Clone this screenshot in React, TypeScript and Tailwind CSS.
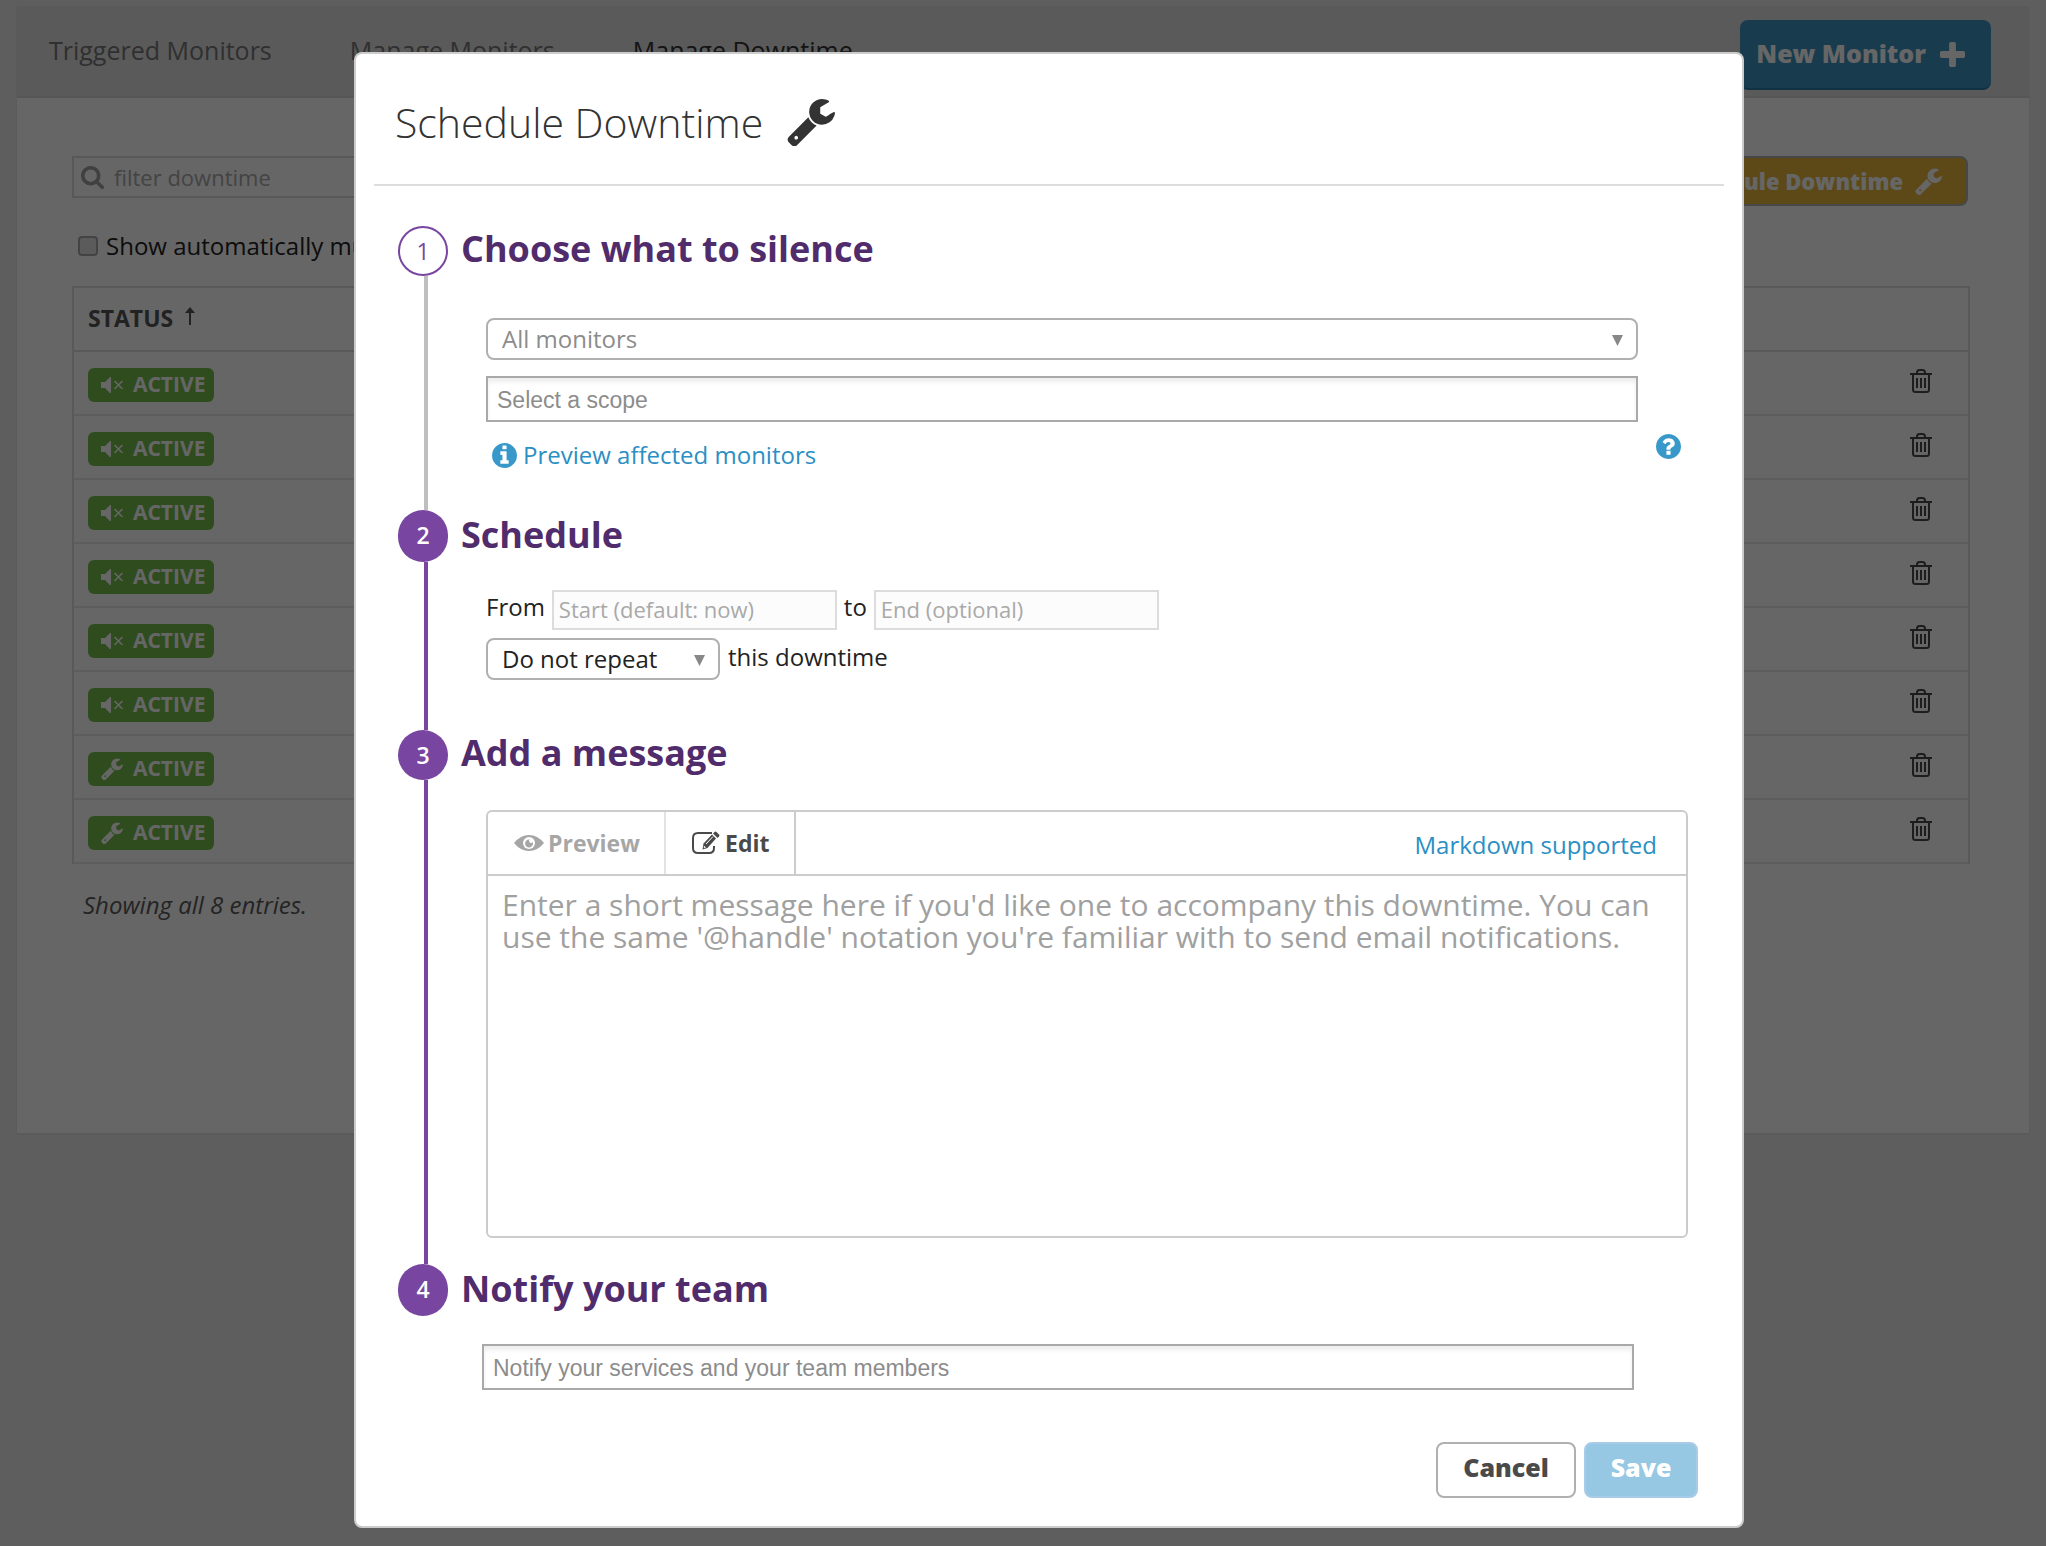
import type { ReactNode } from "react";

type IconProps = { className?: string };

function WrenchIcon({ className }: IconProps) {
  return (
    <svg viewBox="64 128 1664 1600" className={className} fill="currentColor" aria-hidden="true">
      <path d="M448 1472q0-26-19-45t-45-19-45 19-19 45 19 45 45 19 45-19 19-45zm644-420l-682 682q-37 37-90 37-52 0-91-37l-106-108q-38-36-38-90 0-53 38-91l681-681q39 98 114.500 173.500t173.500 114.500zm634-435q0 39-23 106-47 134-164.500 217.500t-258.500 83.500q-185 0-316.500-131.500t-131.500-316.500 131.500-316.500 316.500-131.500q58 0 121.500 16.500t107.500 46.500q16 11 16 28t-16 28l-293 169v224l193 107q5-3 79-48.500t135.500-81 70.500-35.500q15 0 23.500 10t8.500 25z" />
    </svg>
  );
}

function PlusIcon({ className }: IconProps) {
  return (
    <svg viewBox="192 128 1408 1408" className={className} fill="currentColor" aria-hidden="true">
      <path d="M1600 736v192q0 40-28 68t-68 28h-416v416q0 40-28 68t-68 28h-192q-40 0-68-28t-28-68v-416h-416q-40 0-68-28t-28-68v-192q0-40 28-68t68-28h416v-416q0-40 28-68t68-28h192q40 0 68 28t28 68v416h416q40 0 68 28t28 68z" />
    </svg>
  );
}

function SearchIcon({ className }: IconProps) {
  return (
    <svg viewBox="64 128 1664 1664" className={className} fill="currentColor" aria-hidden="true">
      <path d="M1216 832q0-185-131.500-316.500t-316.500-131.500-316.500 131.500-131.500 316.500 131.500 316.500 316.500 131.500 316.500-131.500 131.500-316.500zm512 832q0 52-38 90t-90 38q-54 0-90-38l-343-342q-179 124-399 124-143 0-273.500-55.500t-225-150-150-225-55.500-273.500 55.500-273.500 150-225 225-150 273.500-55.500 273.500 55.500 225 150 150 225 55.500 273.500q0 220-124 399l343 343q37 37 37 90z" />
    </svg>
  );
}

function InfoIcon({ className }: IconProps) {
  return (
    <svg viewBox="128 128 1536 1536" className={className} fill="currentColor" aria-hidden="true">
      <path d="M1152 1376v-160q0-14-9-23t-23-9h-96v-512q0-14-9-23t-23-9h-320q-14 0-23 9t-9 23v160q0 14 9 23t23 9h96v320h-96q-14 0-23 9t-9 23v160q0 14 9 23t23 9h448q14 0 23-9t9-23zm-128-896v-160q0-14-9-23t-23-9h-192q-14 0-23 9t-9 23v160q0 14 9 23t23 9h192q14 0 23-9t9-23zm640 416q0 209-103 385.500t-279.500 279.500-385.500 103-385.500-103-279.500-279.500-103-385.500 103-385.500 279.500-279.500 385.500-103 385.500 103 279.500 279.500 103 385.500z" />
    </svg>
  );
}

function QuestionIcon({ className }: IconProps) {
  return (
    <svg viewBox="128 128 1536 1536" className={className} fill="currentColor" aria-hidden="true">
      <path d="M1024 1376v-192q0-14-9-23t-23-9h-192q-14 0-23 9t-9 23v192q0 14 9 23t23 9h192q14 0 23-9t9-23zm256-672q0-88-55.500-163t-138.500-116-170-41q-243 0-371 213-15 24 8 42l132 100q7 6 19 6 16 0 25-12 53-68 86-92 34-24 86-24 48 0 85.500 26t37.500 59q0 38-20 61t-68 45q-63 28-115.500 86.500t-52.500 125.500v36q0 14 9 23t23 9h192q14 0 23-9t9-23q0-19 21.500-49.500t54.500-49.500q32-18 49-28.500t46-35 44.500-48 28-60.500 12.500-81zm384 192q0 209-103 385.500t-279.500 279.500-385.500 103-385.500-103-279.500-279.500-103-385.500 103-385.500 279.500-279.500 385.500-103 385.500 103 279.500 279.500 103 385.500z" />
    </svg>
  );
}

function MuteIcon({ className }: IconProps) {
  return (
    <svg viewBox="0 0 22 16" className={className} aria-hidden="true">
      <path d="M0 5h4l5-5h1v16H9l-5-5H0z" fill="currentColor" />
      <path d="M13.500 4l8 8M21.500 4l-8 8" fill="none" stroke="currentColor" strokeWidth="1.500" />
    </svg>
  );
}

function TrashIcon({ className }: IconProps) {
  return (
    <svg viewBox="0 0 22 24" className={className} fill="none" stroke="currentColor" strokeWidth="2" aria-hidden="true">
      <path d="M0 5h22" />
      <path d="M7 4.500V3.500Q7 1 9.500 1h3Q15 1 15 3.500v1" />
      <path d="M3 5v15.500Q3 23 5.500 23h11q2.500 0 2.500-2.500V5" />
      <path d="M7 9v10M11 9v10M15 9v10" />
    </svg>
  );
}

function EyeIcon({ className }: IconProps) {
  return (
    <svg viewBox="0 0 30 16" className={className} aria-hidden="true">
      <path d="M0 8Q6.500 0 15 0t15 8q-6.500 8-15 8T0 8z" fill="currentColor" />
      <circle cx="15" cy="8" r="6" fill="#fff" />
      <path d="M15.500 4.500a1.800 1.800 0 1 0 3.300 2.500A4 4 0 1 1 15.500 4.500z" fill="currentColor" />
    </svg>
  );
}

function EditIcon({ className }: IconProps) {
  return (
    <svg viewBox="0 0 28 24" className={className} aria-hidden="true">
      <path d="M20 2H6Q1 2 1 7v10q0 5 5 5h11q5 0 5-5v-2" fill="none" stroke="currentColor" strokeWidth="2" />
      <path d="M11.500 12.500L20 3.500l4 4-8.500 9.500-5 1.500z" fill="currentColor" />
      <path d="M21 2.500l1.500-1.500q1-1 2 0l2.500 2.500q1 1 0 2L25.500 7z" fill="currentColor" />
      <path d="M14 13l7-7.500" stroke="#fff" strokeWidth="1" />
      <path d="M12 15.500l1.300 1.300" stroke="#fff" strokeWidth="1.500" />
    </svg>
  );
}

function SortArrow({ className }: IconProps) {
  return (
    <svg viewBox="0 0 10 18" className={className} aria-hidden="true">
      <path d="M5 0l5 6H0z" fill="currentColor" />
      <path d="M5 5v13" stroke="currentColor" strokeWidth="2" />
    </svg>
  );
}

function Caret() {
  return (
    <svg viewBox="0 0 11 11" className="pointer-events-none absolute top-[17px] right-[15px] size-[11px] text-[#888]" aria-hidden="true">
      <path d="M0 0h11L5.500 11z" fill="currentColor" />
    </svg>
  );
}

const downtimes = ["mute", "mute", "mute", "mute", "mute", "mute", "wrench", "wrench"];

function MonitorsPage() {
  return (
    <main className="mx-4 mt-1.5 border border-t-0 border-b-2 border-[#e4e4e4] bg-white pb-[212px]">
      <header className="flex items-start justify-between border-b-2 border-[#d8d8d8] bg-[#e0e0e0] pr-[38px] pb-0.5 pl-8">
        <nav className="flex gap-[78px] text-[25px] leading-[88px] whitespace-nowrap text-[#787878]">
          <a href="#triggered">Triggered Monitors</a>
          <a href="#manage">Manage Monitors</a>
          <a href="#downtime" className="text-[#333]">Manage Downtime</a>
        </nav>
        <button className="mt-3.5 flex h-[70px] items-center gap-3.5 rounded-lg border-b-2 border-[#2a7ba5] bg-[#3c96c3] pr-[26px] pl-4 text-[25px] font-extrabold whitespace-nowrap text-white">
          New Monitor
          <PlusIcon className="size-[25px]" />
        </button>
      </header>

      <div className="pt-[58px] pr-[59px] pl-[55px]">
        <div className="flex items-start justify-between">
          <label className="flex h-[42px] w-[420px] items-center gap-2.5 border-2 border-[#dcdcdc] px-[7px] text-[#a0a0a0]">
            <SearchIcon className="size-[23px]" />
            <input
              type="text"
              aria-label="Filter downtime"
              placeholder="filter downtime"
              className="min-w-0 flex-1 text-[22px] outline-none placeholder:text-[#aaa]"
            />
          </label>
          <button className="mr-0.5 flex h-[50px] items-center gap-3 rounded-lg border-2 border-[#b2b2b2] bg-[#e6b63a] px-6 text-[22px] font-extrabold text-white">
            Schedule Downtime
            <WrenchIcon className="size-[27px]" />
          </button>
        </div>

        <label className="mt-5 flex items-center gap-2 pl-1.5 text-[24px] leading-10 text-[#222]">
          <input type="checkbox" className="size-5 appearance-none rounded border-2 border-[#a8a8a8] bg-[#e4e4e4]" />
          Show automatically muted
        </label>

        <table className="mt-5 w-full border-separate border-spacing-0 border-x-2 border-t-2 border-[#dedede]">
          <thead>
            <tr className="h-16">
              <th scope="col" className="border-b-2 border-[#dedede] pb-0.5 pl-3.5 text-left text-[23px] font-bold text-[#555]">
                <span className="flex items-center gap-3">
                  STATUS
                  <SortArrow className="mb-1 h-[18px] w-2.5" />
                </span>
              </th>
              <th scope="col" aria-label="Actions" className="border-b-2 border-[#dedede]" />
            </tr>
          </thead>
          <tbody>
            {downtimes.map((kind, i) => (
              <tr key={i} className="h-16">
                <td className="border-b-2 border-[#e8e8e8] pt-1 pl-3.5">
                  <span className="flex h-[34px] w-[126px] items-center gap-2.5 rounded-md bg-[#75be4e] pl-[13px] text-[21px] font-bold text-white">
                    {kind === "mute" ? <MuteIcon className="h-4 w-[22px]" /> : <WrenchIcon className="size-[22px]" />}
                    ACTIVE
                  </span>
                </td>
                <td className="border-b-2 border-[#e8e8e8] pt-0.5 pr-9 text-right">
                  <button aria-label="Delete downtime" className="text-[#4a4a4a]">
                    <TrashIcon className="h-6 w-[22px]" />
                  </button>
                </td>
              </tr>
            ))}
          </tbody>
        </table>

        <p className="mt-6 pt-px pl-[11px] text-[24px] leading-8 text-[#5a5a5a] italic">Showing all 8 entries.</p>
      </div>
    </main>
  );
}

type StepProps = {
  number: number;
  title: string;
  outlined?: boolean;
  tall?: boolean;
  last?: boolean;
  children: ReactNode;
};

function Step({ number, title, outlined, tall, last, children }: StepProps) {
  return (
    <section className="flex gap-[13px]">
      <div className="flex w-[50px] flex-col items-center">
        <span
          className={
            outlined
              ? "flex h-[50px] w-[50px] shrink-0 items-center justify-center rounded-full border-2 border-[#7846a0] text-[23px] text-[#7846a0]"
              : tall
                ? "flex h-[52px] w-[50px] shrink-0 items-center justify-center rounded-full bg-[#7846a0] pb-0.5 text-[23px] font-semibold text-white"
                : "flex h-[50px] w-[50px] shrink-0 items-center justify-center rounded-full bg-[#7846a0] text-[23px] font-semibold text-white"
          }
        >
          {number}
        </span>
        {!last && <span className={outlined ? "ml-1.5 w-1 flex-1 bg-[#bfbfbf]" : "ml-1.5 w-1 flex-1 bg-[#7846a0]"} />}
      </div>
      <div className="min-w-0 flex-1">
        <h2 className={tall ? "text-[36px] leading-[50px] font-bold text-[#512c6c]" : "text-[36px] leading-[46px] font-bold text-[#512c6c]"}>
          {title}
        </h2>
        <div className="pl-[25px]">{children}</div>
      </div>
    </section>
  );
}

const tokenField =
  "block h-[46px] w-full border-2 border-[#a9a9a9] px-[9px] pt-0.5 font-['Liberation_Sans',sans-serif] text-[23px] shadow-[inset_0_4px_4px_#eee] outline-none placeholder:text-[#8c8c8c]";
const dateField =
  "h-10 w-[285px] border-2 border-[#dcdcdc] bg-[#fcfcfc] px-[5px] pb-0.5 text-[22px] outline-none placeholder:text-[#a9a9a9]";

function ScheduleDialog() {
  return (
    <div role="dialog" aria-modal="true" aria-labelledby="dialog-title" className="w-full max-w-[1390px] rounded-lg border-2 border-[#ccc] bg-white pb-7">
      <div className="mx-[18px] flex items-center gap-6 border-b-2 border-[#ddd] pt-10 pb-[34px] pl-[21px]">
        <h1 id="dialog-title" className="text-[41px] leading-[56px] font-light text-[#333]">Schedule Downtime</h1>
        <WrenchIcon className="size-12 text-[#333]" />
      </div>

      <form className="mt-10 pr-[54px] pl-[42px]">
        <Step number={1} title="Choose what to silence" outlined>
          <div className="pt-[46px] pr-[50px]">
            <div className="relative">
              <select aria-label="Monitors" className="block h-[42px] w-full appearance-none rounded-lg border-2 border-[#b0b0b0] bg-white px-3.5 text-[24px] leading-8 text-[#8c8c8c]">
                <option>All monitors</option>
              </select>
              <Caret />
            </div>
            <input type="text" aria-label="Scope" placeholder="Select a scope" className={"mt-4 " + tokenField} />
          </div>
          <div className="flex items-start justify-between pt-3 pr-[7px] pb-[39px] pl-1.5">
            <a href="#preview" className="flex items-center gap-1.5 pt-[5px] text-[24px] leading-8 text-[#2b8fc4]">
              <InfoIcon className="size-[25px] text-[#3898ca]" />
              Preview affected monitors
            </a>
            <button type="button" aria-label="Help" className="text-[#3898ca]">
              <QuestionIcon className="size-[25px]" />
            </button>
          </div>
        </Step>

        <Step number={2} title="Schedule" tall>
          <div className="pt-[30px] pb-[50px] text-[24px] text-[#222]">
            <div className="flex items-start gap-[7px]">
              <label htmlFor="start" className="leading-[34px]">From</label>
              <input id="start" type="text" placeholder="Start (default: now)" className={dateField} />
              <label htmlFor="end" className="leading-[34px]">to</label>
              <input id="end" type="text" placeholder="End (optional)" className={dateField} />
            </div>
            <div className="mt-2 flex items-start gap-2">
              <div className="relative">
                <select id="repeat" aria-label="Repeat" className="block h-[42px] w-[234px] appearance-none rounded-lg border-2 border-[#b0b0b0] bg-white px-3.5 leading-8">
                  <option>Do not repeat</option>
                </select>
                <Caret />
              </div>
              <label htmlFor="repeat" className="leading-[38px]">this downtime</label>
            </div>
          </div>
        </Step>

        <Step number={3} title="Add a message">
          <div className="pt-[34px] pb-[26px]">
            <div className="rounded-md border-2 border-[#ccc]">
              <div className="flex h-16 items-stretch border-b-2 border-[#ccc] text-[23px] font-bold">
                <button type="button" className="flex w-[178px] items-center gap-1 border-r-2 border-[#e2e2e2] pl-[26px] text-[#a6a6a6]">
                  <EyeIcon className="h-4 w-[30px]" />
                  Preview
                </button>
                <button type="button" className="flex w-[130px] items-center gap-[5px] border-r-2 border-[#ccc] pl-[26px] text-[#4a4a4a]">
                  <EditIcon className="h-6 w-7" />
                  Edit
                </button>
                <a href="#markdown" className="ml-auto self-center pt-1 pr-[29px] text-[24px] font-normal text-[#2b8fc4]">Markdown supported</a>
              </div>
              <textarea
                aria-label="Message"
                placeholder="Enter a short message here if you'd like one to accompany this downtime. You can use the same '@handle' notation you're familiar with to send email notifications."
                className="block h-[360px] w-full resize-none px-3.5 pt-[13px] text-[30px] leading-8 outline-none placeholder:text-[#a0a0a0]"
              />
            </div>
          </div>
        </Step>

        <Step number={4} title="Notify your team" tall last>
          <div className="-ml-1 pt-[30px] pr-[54px]">
            <input type="text" aria-label="Recipients" placeholder="Notify your services and your team members" className={tokenField} />
          </div>
        </Step>

        <div className="-mr-2.5 mt-[52px] flex justify-end gap-2 text-[25px] font-extrabold">
          <button type="button" className="h-14 w-[140px] rounded-lg border-2 border-[#b0b0b0] bg-white pb-1 text-[#4a4a4a]">Cancel</button>
          <button type="submit" className="h-14 w-[114px] rounded-lg border-2 border-[#a8cbe8] bg-[#96c8e4] pb-1 text-white">Save</button>
        </div>
      </form>
    </div>
  );
}

export default function App() {
  return (
    <div className="relative flow-root min-h-screen bg-[#ececec] font-['Open_Sans',sans-serif]">
      <MonitorsPage />
      <div className="absolute inset-0 flex items-start justify-center bg-black/60 pt-[52px] pl-[52px]">
        <ScheduleDialog />
      </div>
    </div>
  );
}
